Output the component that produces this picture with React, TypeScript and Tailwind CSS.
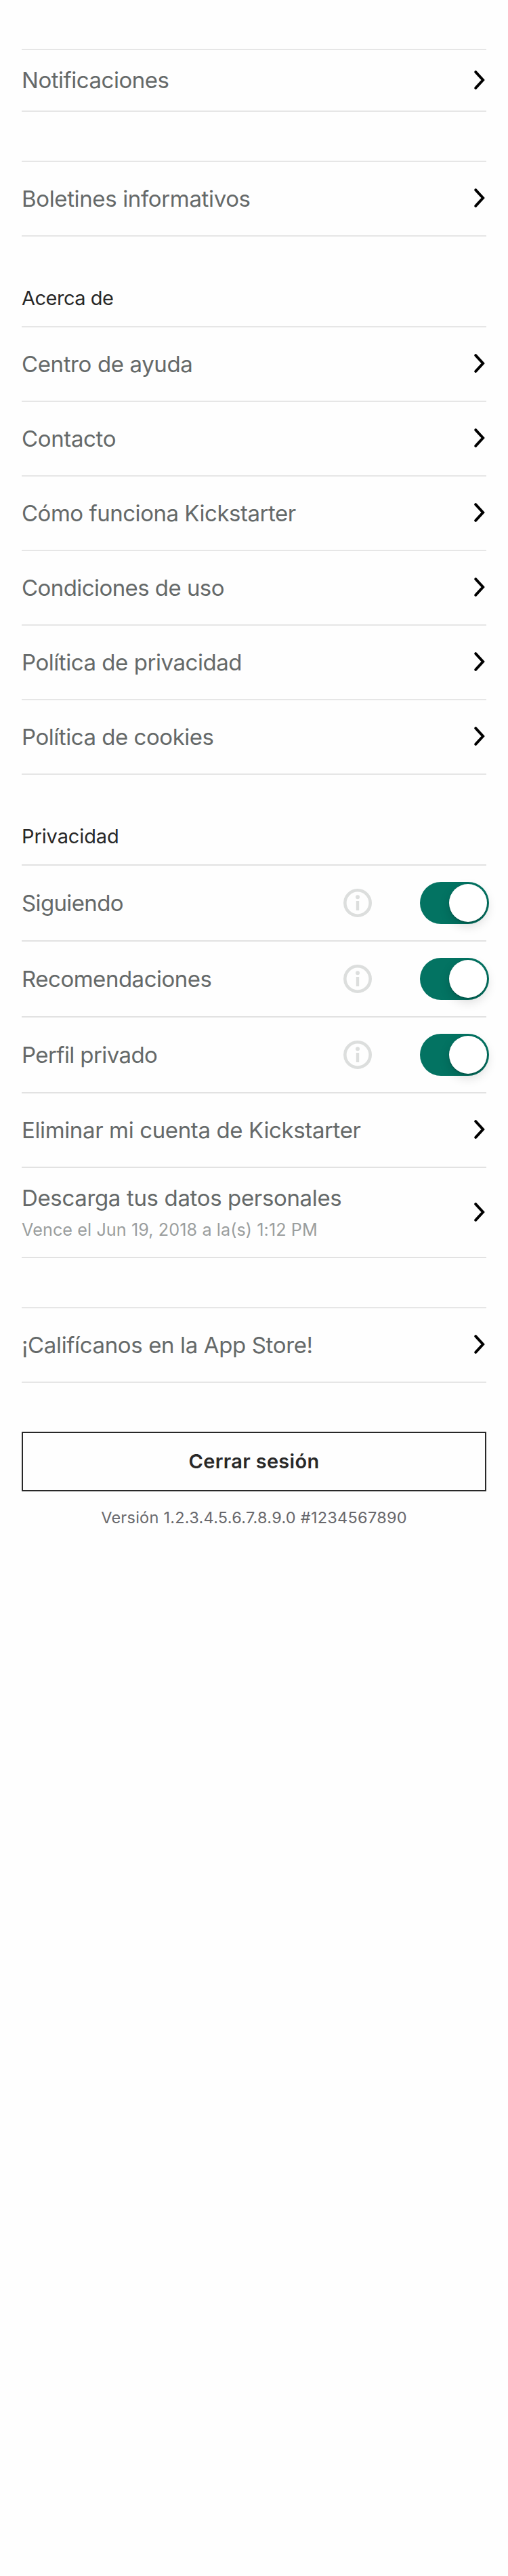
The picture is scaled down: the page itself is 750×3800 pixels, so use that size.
import React from "react";

function Chevron({ className = "mb-[2px]" }: { className?: string }) {
  return (
    <svg
      viewBox="0 0 16 28"
      className={`mr-[2px] h-[28px] w-[16px] shrink-0 overflow-visible ${className}`}
      fill="none"
      stroke="#000"
      strokeWidth="4"
      strokeLinecap="round"
    >
      <path d="M2.2 2.2 13.1 14 2.2 25.8" />
    </svg>
  );
}

function InfoIcon() {
  return (
    <svg viewBox="0 0 42 42" className="h-[42px] w-[42px]">
      <circle cx="21" cy="21" r="18.7" fill="none" stroke="#dcdedd" strokeWidth="4.6" />
      <circle cx="21" cy="12.2" r="3" fill="#dcdedd" />
      <rect x="18.8" y="18" width="4.4" height="14" fill="#dcdedd" />
    </svg>
  );
}

function Toggle() {
  return (
    <span className="-mr-1 flex h-[62px] w-[102px] items-center justify-end rounded-full bg-[#037362] pr-[3px]">
      <span className="h-14 w-14 rounded-full bg-white shadow-[0_6px_16px_rgba(0,0,0,0.15),0_2px_2px_rgba(0,0,0,0.16),0_0_1px_rgba(0,0,0,0.2)]" />
    </span>
  );
}

const label = "text-[33px] leading-[40px] text-[#656969] whitespace-nowrap";

function LinkRow({
  text,
  tracking,
  className = "h-[110px] border-[#e6e6e6]",
  chevron,
}: {
  text: string;
  tracking: string;
  className?: string;
  chevron?: string;
}) {
  return (
    <a className={`flex items-center justify-between border-t-2 ${className}`}>
      <span className={`${label} ${tracking}`}>{text}</span>
      <Chevron className={chevron} />
    </a>
  );
}

function SwitchRow({ text, tracking }: { text: string; tracking: string }) {
  return (
    <div className="flex h-[112px] items-center border-t-2 border-[#e2e2e2]">
      <span className={`${label} ${tracking} grow`}>{text}</span>
      <button className="mr-[71px]">
        <InfoIcon />
      </button>
      <Toggle />
    </div>
  );
}

function Heading({ text, tracking }: { text: string; tracking: string }) {
  return (
    <h2
      className={`flex h-[132px] items-end pb-[21px] text-[29px] leading-[41px] text-[#282828] ${tracking}`}
    >
      {text}
    </h2>
  );
}

export default function App() {
  return (
    <main className="min-h-[3800px] w-[750px] bg-[#fefefe] px-8 pt-[72px] font-['Inter',sans-serif]">
      <section className="border-b-2 border-[#e6e6e6]">
        <LinkRow
          text="Notificaciones"
          tracking="tracking-[-0.471px]"
          className="h-[91px] border-[#e6e6e6] pb-px"
          chevron="mb-0"
        />
      </section>

      <section className="mt-[72px] border-b-2 border-[#e6e6e6]">
        <LinkRow text="Boletines informativos" tracking="tracking-[-0.362px]" />
      </section>

      <Heading text="Acerca de" tracking="tracking-[-0.496px]" />
      <section className="border-b-2 border-[#e6e6e6]">
        <LinkRow text="Centro de ayuda" tracking="tracking-[-0.38px]" />
        <LinkRow text="Contacto" tracking="tracking-[-0.358px]" />
        <LinkRow text="Cómo funciona Kickstarter" tracking="tracking-[-0.481px]" />
        <LinkRow text="Condiciones de uso" tracking="tracking-[-0.566px]" />
        <LinkRow text="Política de privacidad" tracking="tracking-[-0.453px]" />
        <LinkRow text="Política de cookies" tracking="tracking-[-0.463px]" />
      </section>

      <Heading text="Privacidad" tracking="tracking-[-0.11px]" />
      <section className="border-b-2 border-[#e2e2e2]">
        <SwitchRow text="Siguiendo" tracking="tracking-[-0.644px]" />
        <SwitchRow text="Recomendaciones" tracking="tracking-[-0.484px]" />
        <SwitchRow text="Perfil privado" tracking="tracking-[-0.601px]" />
        <LinkRow
          text="Eliminar mi cuenta de Kickstarter"
          tracking="tracking-[-0.37px]"
          className="h-[110px] border-[#e2e2e2]"
        />
        <a className="flex h-[133px] items-center justify-between border-t-2 border-[#e2e2e2]">
          <span className="flex flex-col gap-[11px]">
            <span className={`${label} tracking-[-0.352px]`}>Descarga tus datos personales</span>
            <span className="text-[25.2px] leading-[32px] tracking-[0.079px] text-[#9b9e9e]">
              Vence el Jun 19, 2018 a la(s) 1:12 PM
            </span>
          </span>
          <Chevron className="mb-px" />
        </a>
      </section>

      <section className="mt-[72px] border-b-2 border-[#e6e6e6]">
        <LinkRow text="¡Califícanos en la App Store!" tracking="tracking-[-0.369px]" />
      </section>

      <button className="mt-[72px] flex h-[88px] w-full items-center justify-center border-2 border-[#282828] text-[29px] font-semibold leading-[40px] tracking-[0.302px] text-[#282828]">
        Cerrar sesión
      </button>
      <p className="mt-[23px] text-center text-[23.5px] leading-[31px] tracking-[0.256px] text-[#68686c]">
        Versión 1.2.3.4.5.6.7.8.9.0 #1234567890
      </p>
    </main>
  );
}
